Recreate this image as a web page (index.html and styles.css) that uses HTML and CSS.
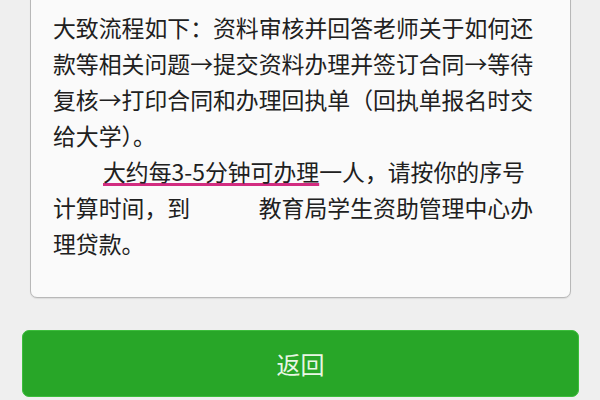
FILE: index.html
```html
<!DOCTYPE html>
<html lang="zh-CN">
<head>
<meta charset="utf-8">
<title>流程</title>
<link rel="stylesheet" href="styles.css">
</head>
<body>
<div class="page">
  <div class="card">
    <p class="para">大致流程如下：资料审核并回答老师关于如何还款等相关问题→提交资料办理并签订合同→等待复核→打印合同和办理回执单（回执单报名时交给大学）。</p>
    <p class="para indent"><span class="mark">大约每3-5分钟可办理</span>一人，请按你的序号计算时间，到<span class="redact">某某市</span>教育局学生资助管理中心办理贷款。</p>
  </div>
  <button class="btn" type="button">返回</button>
</div>
</body>
</html>
```
FILE: styles.css
```css
html, body {
  margin: 0;
  padding: 0;
}
body {
  background: #efefef;
  width: 600px;
  height: 400px;
  overflow: hidden;
  font-family: "Noto Sans CJK SC", "Noto Sans", sans-serif;
}
.page {
  display: flex;
  flex-direction: column;
  align-items: flex-start;
}
.card {
  box-sizing: border-box;
  width: 541px;
  margin: -12px 0 0 30px;
  padding: 20px 24px 36px 22px;
  background: #fafafa;
  border: 1px solid #b8b8b8;
  border-radius: 7px;
  box-shadow: 0 1px 1px rgba(0,0,0,0.08);
}
.para {
  margin: 0;
  font-size: 22.86px;
  line-height: 36px;
  color: #202020;
}
.indent {
  text-indent: 50px;
}
.mark {
  text-decoration: underline;
  text-decoration-color: #d22c80;
  text-decoration-thickness: 3px;
  text-underline-offset: 2px;
}
.redact {
  color: rgba(0,0,0,0.025);
}
.btn {
  box-sizing: border-box;
  width: 557px;
  height: 67px;
  margin: 32px 0 0 22px;
  background: #28a628;
  border: 1px solid #3cbd3c;
  border-radius: 7px;
  color: #e9f6e4;
  font-family: "Noto Sans CJK SC", "Noto Sans", sans-serif;
  font-size: 24px;
  padding: 0;
  display: flex;
  align-items: center;
  justify-content: center;
}
```
